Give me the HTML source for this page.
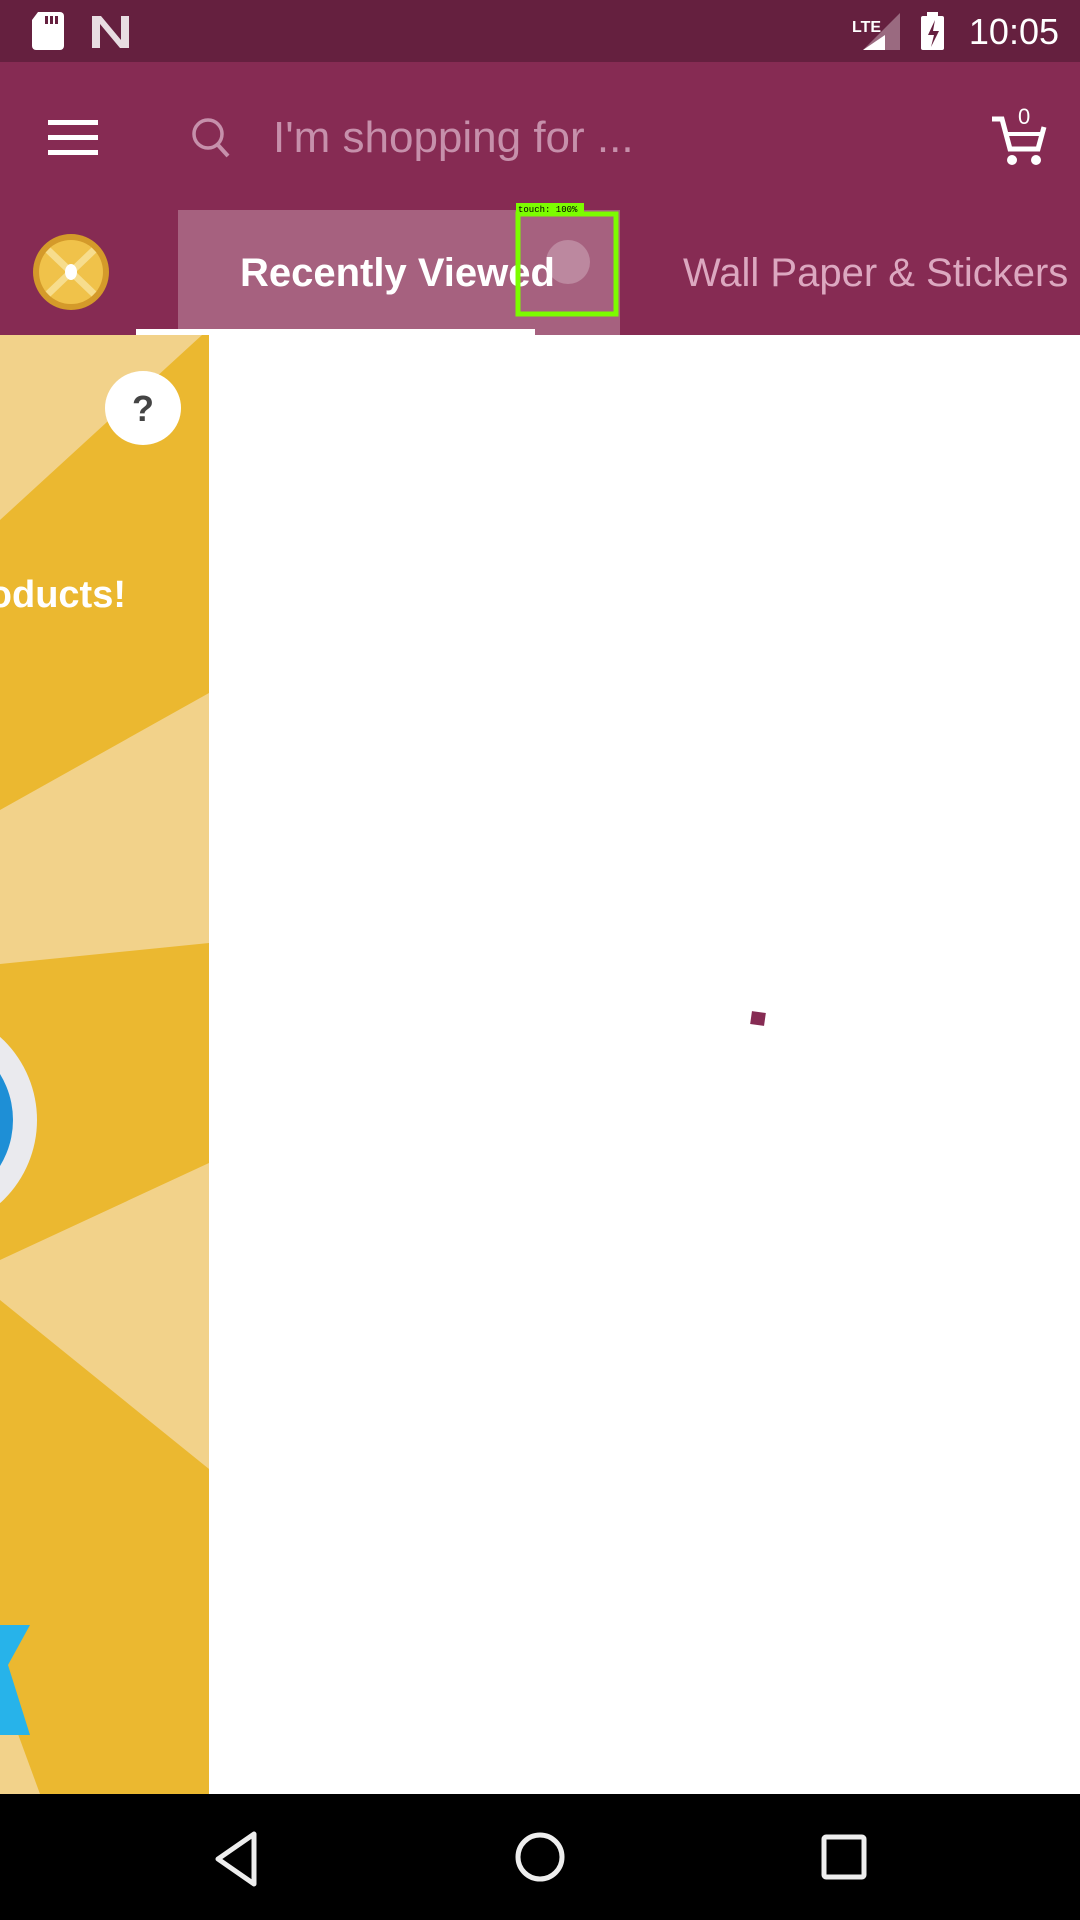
<!DOCTYPE html>
<html><head><meta charset="utf-8"><style>
*{margin:0;padding:0;box-sizing:border-box}
body{width:1080px;height:1920px;overflow:hidden;background:#fff;font-family:"Liberation Sans",sans-serif;position:relative}
.abs{position:absolute}
</style></head><body>
<div class="abs" style="left:0;top:0;width:1080px;height:62px;background:#65203f"></div>
<div class="abs" style="left:0;top:62px;width:1080px;height:273px;background:#862b53"></div>
<svg class="abs" style="left:0;top:0" width="1080" height="62">
<path d="M38 12h22a4 4 0 0 1 4 4v30a4 4 0 0 1-4 4H36a4 4 0 0 1-4-4V20z" fill="#fff"/>
<rect x="45" y="16" width="3" height="8" fill="#65203f"/><rect x="50" y="16" width="3" height="8" fill="#65203f"/><rect x="55" y="16" width="3" height="8" fill="#65203f"/>
<path d="M92 16h9l20 24v-24h8v32h-9l-20-24v24h-8z" fill="#fff" opacity="0.85"/>
<text x="852" y="32" font-size="16" font-weight="bold" fill="#fff" font-family="Liberation Sans">LTE</text>
<path d="M900 13v37h-37z" fill="#9a6a80"/><path d="M885 35v15h-22z" fill="#fff"/>
<rect x="921" y="16" width="23" height="34" rx="2" fill="#fff"/><rect x="927" y="12" width="11" height="5" fill="#fff"/>
<path d="M935 20l-7 15h6l-3 12 8-16h-6z" fill="#65203f"/>
<text x="1059" y="44" font-size="36" fill="#fff" text-anchor="end" font-family="Liberation Sans">10:05</text>
</svg>
<svg class="abs" style="left:0;top:62px" width="1080" height="273">
<rect x="48" y="58" width="50" height="5" fill="#fff"/><rect x="48" y="73" width="50" height="5" fill="#fff"/><rect x="48" y="88" width="50" height="5" fill="#fff"/>
<circle cx="208" cy="72" r="14" stroke="#c690ab" stroke-width="3.5" fill="none"/><path d="M218 83l10 11" stroke="#c690ab" stroke-width="4"/>
<text x="273" y="90" font-size="44" fill="#c690ab" font-family="Liberation Sans">I'm shopping for ...</text>
<path d="M992 57h10l8 30h28l6-22" stroke="#fff" stroke-width="5" fill="none"/><path d="M1006 72h34" stroke="#fff" stroke-width="4"/>
<circle cx="1012" cy="98" r="5" fill="#fff"/><circle cx="1036" cy="98" r="5" fill="#fff"/>
<text x="1018" y="62" font-size="22" fill="#fff" font-family="Liberation Sans">0</text>
<rect x="178" y="148" width="442" height="125" fill="#a6617f"/>
<circle cx="71" cy="210" r="38" fill="#d49a2a"/><circle cx="71" cy="210" r="32" fill="#f0c24a"/>
<path d="M71 210L48 188M71 210L94 188M71 210L48 232M71 210L94 232" stroke="#f7dd8d" stroke-width="7"/>
<ellipse cx="71" cy="210" rx="6" ry="8" fill="#fff"/>
<text x="240" y="224" font-size="40" font-weight="bold" fill="#fff" font-family="Liberation Sans">Recently Viewed</text>
<text x="683" y="224" font-size="40" fill="#dca8c0" font-family="Liberation Sans">Wall Paper &amp; Stickers</text>
<circle cx="568" cy="200" r="22" fill="#fff" opacity="0.25"/>
<rect x="518" y="152" width="98" height="100" stroke="#7cfc00" stroke-width="5" fill="none"/>
<rect x="516" y="141" width="68" height="11" fill="#7cfc00"/>
<text x="518" y="150" font-size="9" font-family="Liberation Mono" fill="#000">touch: 100%</text>
<rect x="136" y="267" width="399" height="6" fill="#fff"/>
</svg>
<svg class="abs" style="left:0;top:335px" width="209" height="1459">
<rect width="209" height="1459" fill="#ebb830"/>
<path d="M0 0H202L0 185z" fill="#f2d28a"/>
<path d="M0 475L209 358V608L0 629z" fill="#f2d28a"/>
<path d="M0 925L209 828V1134L0 965z" fill="#f2d28a"/>
<path d="M0 1350L40 1459H0z" fill="#f2d28a"/>
<circle cx="-75" cy="785" r="112" fill="#eaeaee"/>
<circle cx="-75" cy="785" r="88" fill="#1e8fd6"/>
<circle cx="-75" cy="785" r="60" fill="#2fb0ea"/>
<path d="M0 1290L30 1290 8 1330 30 1400 0 1400z" fill="#27b3ea"/>
<ellipse cx="143" cy="73" rx="38" ry="37" fill="#fff"/>
<text x="143" y="86" font-size="36" font-weight="bold" fill="#444" text-anchor="middle" font-family="Liberation Sans">?</text>
<text x="126" y="272" font-size="38" font-weight="bold" fill="#fff" text-anchor="end" font-family="Liberation Sans">Products!</text>
</svg>
<div class="abs" style="left:751px;top:1012px;width:14px;height:13px;background:#862b53;transform:rotate(8deg)"></div>
<div class="abs" style="left:0;top:1794px;width:1080px;height:126px;background:#000"></div>
<svg class="abs" style="left:0;top:1794px" width="1080" height="126">
<path d="M254 40v50l-36-25z" stroke="#eee" stroke-width="5" fill="none" stroke-linejoin="round"/>
<circle cx="540" cy="63" r="22" stroke="#eee" stroke-width="5" fill="none"/>
<rect x="824" y="43" width="40" height="40" rx="2" stroke="#eee" stroke-width="5" fill="none"/>
</svg>
</body></html>
